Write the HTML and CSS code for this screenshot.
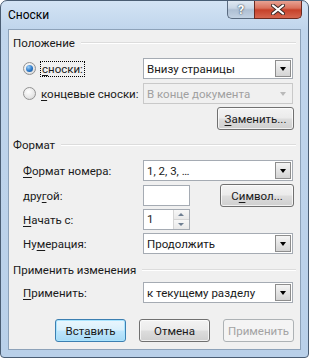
FILE: index.html
```html
<!DOCTYPE html>
<html lang="ru">
<head>
    <meta charset="UTF-8">
    <title>Сноски</title>
    <link rel="stylesheet" href="styles.css">
</head>
<body>
    <div class="window">
        <div class="titlebar">
            <span class="title">Сноски</span>
            <div class="caption-buttons">
                <div class="cap-btn help-btn">?</div>
                <div class="cap-btn close-btn">
                    <svg width="14" height="11" viewBox="0 0 14 11">
                        <path d="M2 1.5 L12 9.5 M12 1.5 L2 9.5" stroke="#3b2a28" stroke-width="4" stroke-linecap="round"/>
                        <path d="M2 1.5 L12 9.5 M12 1.5 L2 9.5" stroke="#ffffff" stroke-width="2.2" stroke-linecap="round"/>
                    </svg>
                </div>
            </div>
        </div>

        <div class="client">
            <!-- Положение -->
            <div class="group-title g1">Положение</div>

            <div class="row radio-row r1">
                <span class="radio checked"></span>
                <span class="row-label radio-label"><span class="focus"><u>с</u>носки:</span></span>
                <div class="combo">
                    <span class="combo-text">Внизу страницы</span>
                    <span class="combo-arrow"></span>
                </div>
            </div>

            <div class="row radio-row r2">
                <span class="radio"></span>
                <span class="row-label radio-label"><u>к</u>онцевые сноски:</span>
                <div class="combo disabled">
                    <span class="combo-text">В конце документа</span>
                    <span class="combo-arrow"></span>
                </div>
            </div>

            <div class="btn-row">
                <button class="btn btn-convert"><u>З</u>аменить...</button>
            </div>

            <!-- Формат -->
            <div class="group-title g2">Формат</div>

            <div class="row r-format">
                <span class="row-label"><u>Ф</u>ормат номера:</span>
                <div class="combo">
                    <span class="combo-text">1, 2, 3, …</span>
                    <span class="combo-arrow"></span>
                </div>
            </div>

            <div class="row r-other">
                <span class="row-label">дру<u>г</u>ой:</span>
                <div class="textbox short"></div>
                <button class="btn btn-symbol">С<u>и</u>мвол...</button>
            </div>

            <div class="row r-start">
                <span class="row-label"><u>Н</u>ачать с:</span>
                <div class="spinner">
                    <span class="spin-text">1</span>
                    <span class="spin-btns">
                        <span class="spin-up"></span>
                        <span class="spin-down"></span>
                    </span>
                </div>
            </div>

            <div class="row r-numbering">
                <span class="row-label">Ну<u>м</u>ерация:</span>
                <div class="combo">
                    <span class="combo-text">Продолжить</span>
                    <span class="combo-arrow"></span>
                </div>
            </div>

            <!-- Применить изменения -->
            <div class="group-title g3">Применить изменения</div>

            <div class="row r-apply">
                <span class="row-label"><u>П</u>рименить:</span>
                <div class="combo">
                    <span class="combo-text">к текущему разделу</span>
                    <span class="combo-arrow"></span>
                </div>
            </div>

            <div class="dialog-buttons">
                <button class="btn btn-default">Вст<u>а</u>вить</button>
                <button class="btn">Отмена</button>
                <button class="btn" disabled>Применить</button>
            </div>
        </div>
    </div>
</body>
</html>
```

FILE: styles.css
```css
/* Page */
body {
    margin: 0;
    padding: 0;
    font-family: Roboto, "Noto Sans", sans-serif;
    font-size: 11.5px;
    color: #1a1a1a;
}

u {
    text-decoration: underline;
    text-underline-offset: 2px;
}

/* Window frame */
.window {
    width: 309px;
    height: 358px;
    box-sizing: border-box;
    border: 1px solid #4a5d73;
    border-radius: 7px 7px 4px 4px;
    background: linear-gradient(180deg, #d3e3f4 0px, #c0d5ec 28px, #b9d0e9 100%);
    display: flex;
    flex-direction: column;
    overflow: hidden;
}

.titlebar {
    height: 28px;
    flex-shrink: 0;
    display: flex;
    align-items: flex-start;
    padding-left: 7px;
}

.title {
    padding-top: 5px;
    line-height: 18px;
    font-size: 12px;
    color: #000;
}

.caption-buttons {
    display: flex;
    margin-left: auto;
    margin-right: 6px;
    margin-top: -1px;
}

.cap-btn {
    height: 19px;
    border: 1px solid #5a6b80;
    border-top: none;
    box-sizing: border-box;
    display: flex;
    align-items: center;
    justify-content: center;
}

.help-btn {
    width: 27px;
    border-radius: 0 0 0 5px;
    border-right: none;
    background: linear-gradient(180deg, #e3ebf4 0%, #c9d6e5 45%, #aebfd3 55%, #c2d2e3 100%);
    color: #fff;
    font-weight: bold;
    font-size: 13px;
    text-shadow: 0 0 2px #3a4a5c, 0 0 1px #3a4a5c;
}

.close-btn {
    width: 48px;
    border-radius: 0 0 5px 0;
    background: linear-gradient(180deg, #e9a99b 0%, #d9715c 45%, #c6412a 55%, #d5664f 100%);
    border-color: #6b2a20;
}

/* Client area */
.client {
    flex: 1;
    margin: 0 7px 7px 7px;
    background: #f0f0f0;
    border: 1px solid #8da2b9;
    display: flex;
    flex-direction: column;
}

/* Group titles with line */
.group-title {
    display: flex;
    align-items: center;
    height: 16px;
    padding-left: 4px;
    padding-right: 4px;
    white-space: nowrap;
}

.group-title::after {
    content: "";
    flex: 1;
    height: 1px;
    margin-left: 6px;
    background: #dcdcdc;
    border-bottom: 1px solid #fff;
}

.g1 { margin-top: 5px; }
.g2 { margin-top: 7px; }
.g3 { margin-top: 8px; }

/* Rows */
.row {
    display: flex;
    align-items: center;
    height: 21px;
    padding-left: 14px;
}

.row-label {
    width: 120px;
    flex-shrink: 0;
    white-space: nowrap;
}

.radio-row {
    padding-left: 14px;
}

.radio-row .row-label {
    width: 102px;
    margin-left: 5px;
}

.r1 { margin-top: 7px; }
.r2 { margin-top: 4px; }
.r-format { margin-top: 7px; }
.r-other { margin-top: 3px; height: 23px; }
.r-start { margin-top: 2px; }
.r-numbering { margin-top: 3px; }
.r-apply { margin-top: 4px; }

.focus {
    outline: 1px dotted #000;
    outline-offset: 0px;
    padding: 0 1px;
}

/* Radio buttons */
.radio {
    width: 13px;
    height: 13px;
    box-sizing: border-box;
    border-radius: 50%;
    border: 1px solid #929292;
    background: radial-gradient(circle at 40% 35%, #ffffff 0%, #e6e6e6 60%, #cfcfcf 100%);
    display: flex;
    align-items: center;
    justify-content: center;
    flex-shrink: 0;
}

.radio.checked::before {
    content: "";
    width: 7px;
    height: 7px;
    border-radius: 50%;
    background: radial-gradient(circle at 35% 30%, #9fd0f7 0%, #2b78c8 55%, #154e8c 100%);
}

/* Combo boxes */
.combo {
    width: 150px;
    height: 21px;
    box-sizing: border-box;
    border: 1px solid #a5abb3;
    background: #fff;
    display: flex;
    align-items: center;
}

.combo-text {
    flex: 1;
    padding-left: 3px;
    white-space: nowrap;
    overflow: hidden;
}

.combo-arrow {
    width: 16px;
    height: 17px;
    margin-right: 1px;
    box-sizing: border-box;
    border: 1px solid #8d8d8d;
    background: linear-gradient(180deg, #f5f5f5 0%, #e4e4e4 50%, #d4d4d4 100%);
    position: relative;
}

.combo-arrow::after {
    content: "";
    position: absolute;
    left: 3.5px;
    top: 6px;
    border-left: 3.5px solid transparent;
    border-right: 3.5px solid transparent;
    border-top: 4px solid #000;
}

.combo.disabled {
    background: #f0f0f0;
    border-color: #c9c9c9;
    color: #a0a0a0;
}

.combo.disabled .combo-arrow {
    border-color: transparent;
    background: transparent;
}

.combo.disabled .combo-arrow::after {
    border-top-color: #b9b9b9;
}

/* Text boxes */
.textbox {
    height: 21px;
    box-sizing: border-box;
    border: 1px solid #a5abb3;
    background: #fff;
}

.textbox.short {
    width: 47px;
}

.spinner {
    width: 47px;
    height: 21px;
    box-sizing: border-box;
    border: 1px solid #a5abb3;
    background: #fff;
    display: flex;
}

.spin-text {
    flex: 1;
    padding-left: 3px;
    line-height: 19px;
}

.spin-btns {
    width: 15px;
    display: flex;
    flex-direction: column;
    border-left: 1px solid #d5d5d5;
}

.spin-up,
.spin-down {
    flex: 1;
    position: relative;
    background: linear-gradient(180deg, #f7f7f7, #e9e9e9);
}

.spin-up {
    border-bottom: 1px solid #d5d5d5;
}

.spin-up::after,
.spin-down::after {
    content: "";
    position: absolute;
    left: 4px;
    top: 3px;
    border-left: 3px solid transparent;
    border-right: 3px solid transparent;
}

.spin-up::after {
    border-bottom: 3px solid #6f7f92;
}

.spin-down::after {
    border-top: 3px solid #6f7f92;
}

/* Buttons */
.btn {
    height: 23px;
    box-sizing: border-box;
    border: 1px solid #707070;
    border-radius: 3px;
    background: linear-gradient(180deg, #f3f3f3 0%, #ebebeb 48%, #dddddd 52%, #cfcfcf 100%);
    font-family: Roboto, "Noto Sans", sans-serif;
    font-size: 11.5px;
    color: #1a1a1a;
    padding: 0;
    box-shadow: inset 0 0 0 1px rgba(255, 255, 255, 0.7);
}

.btn:disabled {
    border-color: #adb2b5;
    background: #f4f4f4;
    color: #a3a3a3;
    box-shadow: none;
}

.btn-default {
    border-color: #3c7fb1;
    background: linear-gradient(180deg, #eaf6fd 0%, #d9f0fc 48%, #bee6fd 52%, #a7d9f5 100%);
    box-shadow: inset 0 0 0 1px #a9e4fe;
}

.btn-row {
    display: flex;
    justify-content: flex-end;
    margin-top: 3px;
    padding-right: 6px;
}

.btn-convert {
    width: 77px;
}

.btn-symbol {
    width: 74px;
    margin-left: 30px;
}

.dialog-buttons {
    display: flex;
    justify-content: flex-end;
    gap: 13px;
    margin-top: 16px;
    padding-right: 6px;
}

.dialog-buttons .btn {
    width: 71px;
}
```
